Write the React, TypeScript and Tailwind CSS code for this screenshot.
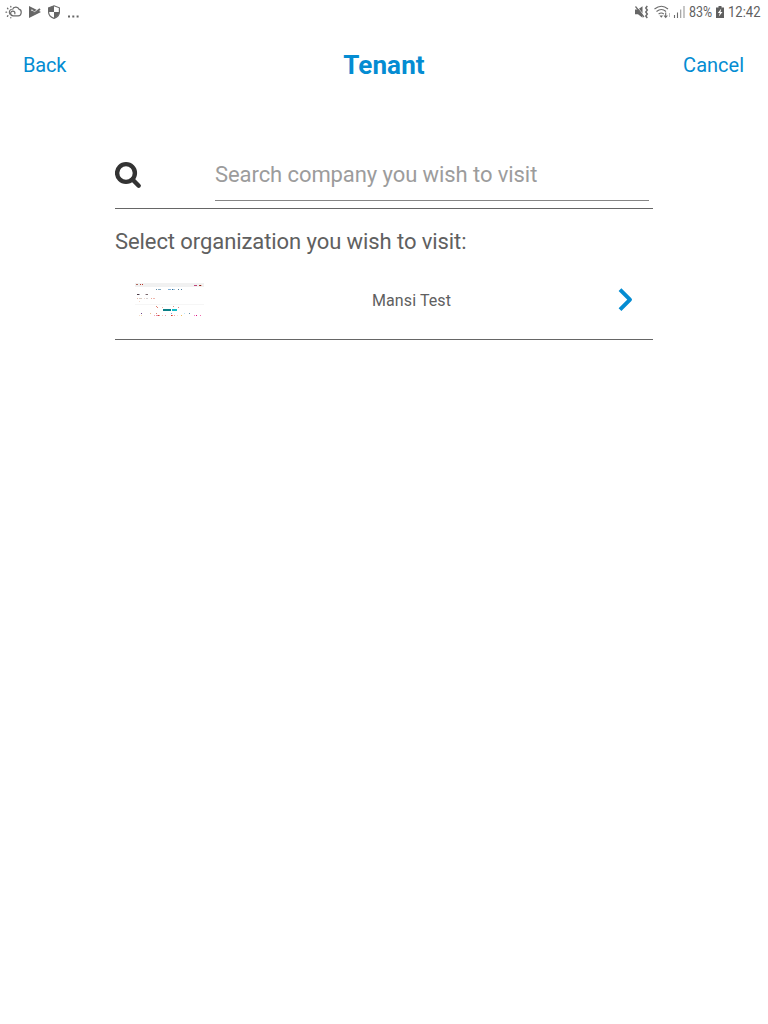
const specks: [number, number, number, string][] = [
  [136, 284, 2, '#b06a60'], [140, 284, 1, '#b03a30'], [142, 284, 1, '#c0392b'],
  [194, 285, 3, '#c0447a'], [199, 285, 2, '#b03a2e'], [200, 285, 1, '#7a2020'], [201, 285, 1, '#f5b7a0'],
  [156, 289, 1, '#5d8aa8'], [158, 289, 3, '#7fa8c0'], [168, 289, 3, '#7fb0d8'], [172, 289, 1, '#2c6a98'],
  [173, 289, 2, '#a9c9dd'], [178, 289, 1, '#4c7d9c'], [181, 289, 1, '#4c7d9c'],
  [137, 294, 2, '#4a3a44'], [139, 294, 1, '#a8a0b0'], [145, 294, 1, '#c8bcc0'], [146, 294, 2, '#78686c'],
  [137, 298, 1, '#e8b8a8'], [139, 298, 3, '#d8ccc4'], [144, 298, 1, '#f0d8d0'], [146, 298, 2, '#d8d4d4'],
  [151, 298, 1, '#e8a898'], [153, 298, 2, '#f0b8b0'], [139, 301, 1, '#f2d8cc'],
  [156, 306, 1, '#e08070'], [157, 307, 1, '#e08070'], [162, 307, 1, '#f0b0a0'], [173, 306, 1, '#e89080'], [178, 307, 1, '#e08888'],
  [141, 313, 1, '#704888'], [150, 313, 1, '#e8c090'], [156, 313, 1, '#e08878'], [171, 313, 1, '#78a8d0'],
  [184, 313, 1, '#c0e8f4'], [189, 313, 1, '#6890a8'], [139, 315, 1, '#f4dcc8'], [141, 315, 1, '#f4dcb0'],
  [154, 315, 1, '#f0a8b8'], [156, 315, 2, '#e890a8'], [158, 315, 1, '#d04040'], [159, 315, 1, '#f0a090'],
  [162, 315, 1, '#f4c8b8'], [165, 315, 1, '#f0a0b0'], [171, 315, 1, '#c83030'], [172, 315, 1, '#f08870'],
  [174, 315, 1, '#f0a0a0'], [177, 315, 1, '#f8e0d0'], [181, 315, 1, '#f0c060'], [194, 315, 1, '#f080c0'],
  [196, 315, 1, '#e00880'], [200, 315, 1, '#f070b0'],
];

function Thumbnail() {
  return (
    <svg width="69" height="36" viewBox="135 282 69 36" shapeRendering="crispEdges">
      <path fill="#f1f1f1" d="M135 283h69v4h-69z" />
      <path fill="#f6f6f6" d="M135 304h69v1h-69z" />
      {specks.map(([x, y, w, color], i) => (
        <rect key={i} x={x} y={y} width={w} height="1" fill={color} />
      ))}
      <path fill="#0b7f86" d="M163 309h8v2h-8z" />
      <path fill="#12b9c6" d="M172 309h5v2h-5z" />
    </svg>
  );
}

function StatusLeft() {
  return (
    <svg width="82" height="24" viewBox="0 0 82 24" fill="none" stroke="#6b6b6b">
      <path strokeWidth="1.2" d="M12.500 9.600c.8-3 5.600-3.400 6.400-.4 3.400.6 3 6.600-.7 6.600h-5c-3.600-.2-3.200-4.700-.5-4.700 2 0 2.800 1.700 1.900 3.200" />
      <path strokeWidth="1.1" d="M11.800 9.200c-2.300.3-3.400 3.500-1.600 5.300" />
      <path strokeWidth="1.300" strokeLinecap="round" d="M6 12.200h.6M7.500 8.300l.4.400M10.800 6.500v.4M7.400 16.200l.5-.5M10.800 17.600v.2" />
      <path fill="#666" stroke="none" d="M29 6l12 6-12 6z" />
      <path stroke="#fff" strokeWidth="1.200" d="M31.500 9.800l2.800 2.700 5.200-4.500" />
      <path strokeWidth="1.900" d="M32 11.200l2.300 2.300 5.700-4.600" />
      <path fill="#fff" strokeWidth="1.200" d="M54 5.800l5.400 2v4.500c0 2.700-2.300 5-5.400 6.100-3.100-1.100-5.400-3.400-5.400-6.100V7.800z" />
      <path fill="#666" stroke="none" d="M54 5.800V12h-5.400V7.800zM54 12h5.400c0 2.700-2.300 5-5.400 6.200z" />
      <path fill="#666" stroke="none" d="M68 15.600h2v2h-2zM72.300 15.600h2v2h-2zM76.600 15.600h2v2h-2z" />
    </svg>
  );
}

function StatusSignals() {
  return (
    <svg width="53" height="24" viewBox="634 0 53 24" fill="none" stroke="#6b6b6b">
      <path fill="#666" stroke="none" d="M635 9.600h3l4.500-3.400v11.600l-4.500-3.500h-3z" />
      <path stroke="#fff" strokeWidth=".8" d="M636.500 6l7.500 9.500" />
      <path strokeWidth="1.200" d="M635.500 6.500l8.500 10.500" />
      <path strokeWidth="1.500" d="M647.300 6l-1.500 2 1.500 2-1.500 2 1.500 2-1.500 2 1.500 2" />
      <path strokeWidth="1.100" d="M654.500 9q7-5.500 13.500 0M656.500 11.500q5-4 9.500 0M658.600 14q2.700-2.100 5.200 0" />
      <path fill="#666" stroke="none" d="M659.500 15.600h3.600l-1.800 2.200z" />
      <path strokeWidth="1.100" d="M665.700 12.500v4.600M664 15.500l1.700 2 1.700-2" />
      <path stroke="#bbb" d="M669.500 13v4" />
      <path strokeWidth="1.100" d="M674.500 15v3M677.500 12.500V18" />
      <path stroke="#999" strokeWidth="1.100" d="M680.700 9.500V18M684 6v12" />
    </svg>
  );
}

export default function App() {
  return (
    <div className="flex h-screen flex-col overflow-hidden bg-white font-['Roboto',sans-serif] text-[#606060]">
      <div className="flex h-6 items-center">
        <StatusLeft />
        <div className="ml-auto flex h-6 items-center text-[15px] leading-6 text-[#5f5f5f]">
          <StatusSignals />
          <div className="ml-0.5 w-[26px]">
            <span className="block w-max origin-left scale-x-[0.83]">83%</span>
          </div>
          <svg width="10" height="24" viewBox="0 0 10 24">
            <path fill="#5f5f5f" d="M3.500 6h3v1.500H9V18H1V7.500h2.500z" />
            <path fill="#fff" d="M6.300 8.500L2.800 13h2l-1 3.500L7.500 12h-2z" />
          </svg>
          <div className="ml-[3px] w-10">
            <span className="block w-max origin-left scale-x-[0.87]">12:42</span>
          </div>
        </div>
      </div>
      <header className="grid h-[82px] grid-cols-3 items-center px-[23px] text-xl text-[#048cd2]">
        <button className="justify-self-start tracking-[-0.2px]">Back</button>
        <h1 className="justify-self-center text-[26px] font-bold tracking-[0.1px]">Tenant</h1>
        <button className="mr-px justify-self-end">Cancel</button>
      </header>
      <main className="mx-auto mt-[43px] w-[538px]">
        <div className="flex h-[60px] border-b border-[#666]">
          <div className="w-[100px] pt-3">
            <svg width="28" height="28" viewBox="0 0 28 28" fill="none" stroke="#333">
              <circle cx="11" cy="12" r="8.900" strokeWidth="4.400" />
              <path strokeWidth="4.400" strokeLinecap="round" d="M17.500 18.500l6.200 6.200" />
            </svg>
          </div>
          <input
            className="mr-1 h-[52px] min-w-0 flex-1 border-b border-[#858585] bg-transparent text-[22px] tracking-[-0.08px] text-[#606060] outline-none placeholder:text-[#9c9c9c]"
            placeholder="Search company you wish to visit"
          />
        </div>
        <p className="mt-[17px] h-8 text-[22px] leading-8 tracking-[-0.08px]">Select organization you wish to visit:</p>
        <div className="flex h-[82px] items-center border-b border-[#666] pt-[3px] pr-[18px] pl-5">
          <Thumbnail />
          <span className="ml-[168px] pt-0.5 text-base tracking-[0.1px]">Mansi Test</span>
          <svg className="ml-auto" width="17" height="26" viewBox="0 0 17 26" fill="none" stroke="#048cd2">
            <path strokeWidth="3.900" strokeLinejoin="round" d="M2 2.600l10 10L2 22.600" />
          </svg>
        </div>
      </main>
    </div>
  );
}
